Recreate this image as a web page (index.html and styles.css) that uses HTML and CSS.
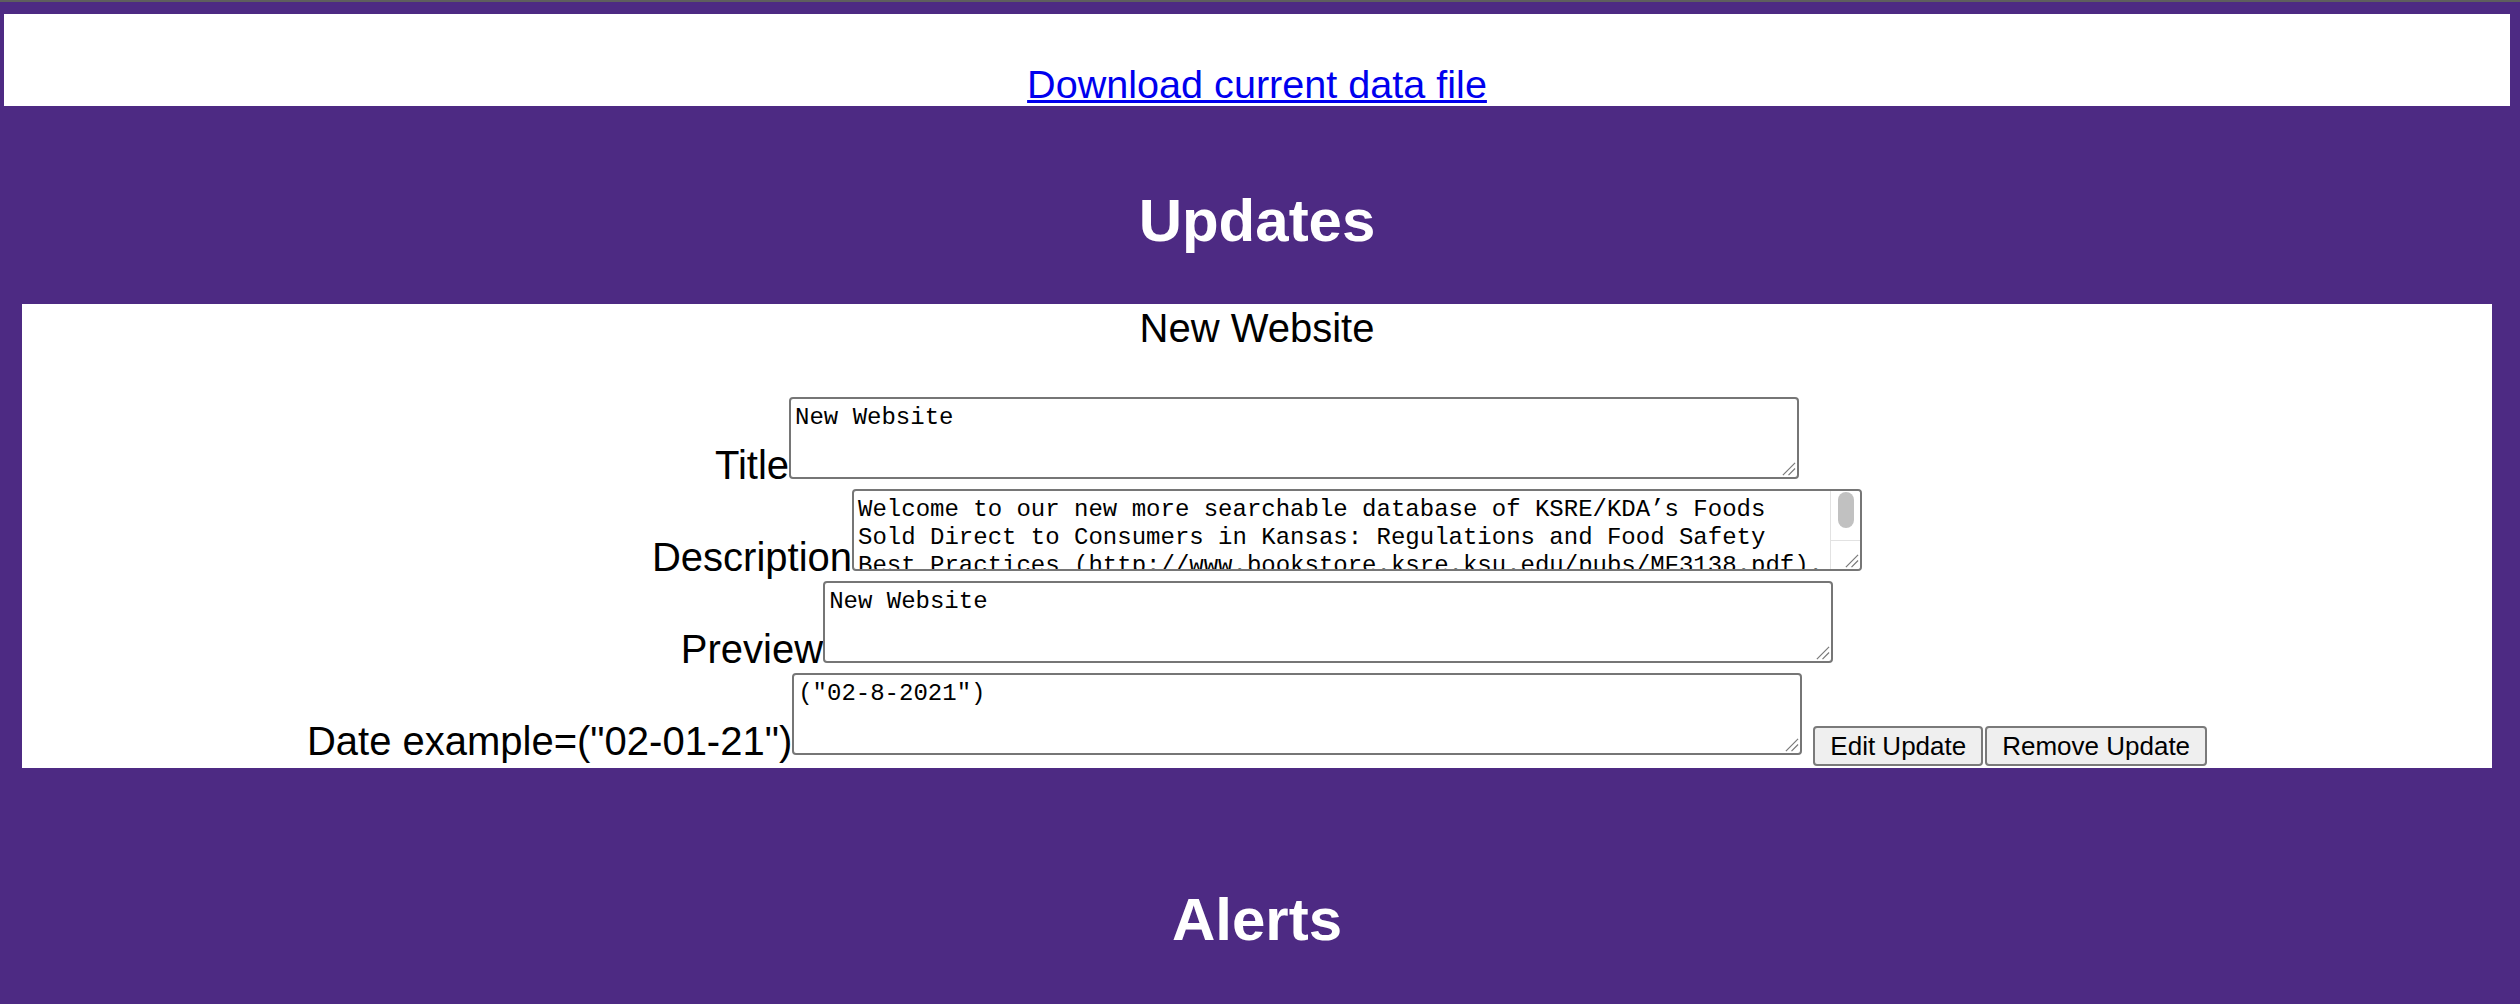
FILE: index.html
```html
<!DOCTYPE html>
<html lang="en">
<head>
<meta charset="utf-8">
<title>Updates</title>
<link rel="stylesheet" href="styles.css">
</head>
<body>
<div class="topline"></div>
<div class="page">
  <div class="download-bar">
    <a href="#" class="download-link">Download current data file</a>
  </div>
  <h2 class="section-title">Updates</h2>
  <div class="card">
    <div class="card-title">New Website</div>
    <div class="field-row"><span class="field-label">Title</span><span class="field-box"><textarea class="field-input">New Website</textarea><svg class="grip" viewBox="0 0 16 16" aria-hidden="true"><path d="M2 15 L15 2 M8 15 L15 8" /></svg></span></div>
    <div class="field-row"><span class="field-label">Description</span><span class="field-box"><textarea class="field-input field-scroll">Welcome to our new more searchable database of KSRE/KDA’s Foods Sold Direct to Consumers in Kansas: Regulations and Food Safety Best Practices (http://www.bookstore.ksre.ksu.edu/pubs/MF3138.pdf). Search by product to find the rules that apply.</textarea><span class="scrollbar" aria-hidden="true"><span class="scroll-track"><span class="scroll-thumb"></span></span><span class="scroll-corner"><svg class="grip grip-corner" viewBox="0 0 16 16"><path d="M2 15 L15 2 M8 15 L15 8" /></svg></span></span></span></div>
    <div class="field-row"><span class="field-label">Preview</span><span class="field-box"><textarea class="field-input">New Website</textarea><svg class="grip" viewBox="0 0 16 16" aria-hidden="true"><path d="M2 15 L15 2 M8 15 L15 8" /></svg></span></div>
    <div class="field-row"><span class="field-label">Date example=("02-01-21")</span><span class="field-box"><textarea class="field-input">("02-8-2021")</textarea><svg class="grip" viewBox="0 0 16 16" aria-hidden="true"><path d="M2 15 L15 2 M8 15 L15 8" /></svg></span> <button class="action-btn">Edit Update</button><button class="action-btn action-btn-next">Remove Update</button></div>
  </div>
  <h2 class="section-title section-title-alerts">Alerts</h2>
</div>
</body>
</html>
```
FILE: styles.css
```css
html, body {
  margin: 0;
  padding: 0;
}

body {
  background: #4d2a83;
  font-family: "Liberation Sans", Arial, sans-serif;
  font-size: 40px;
  line-height: 48px;
  color: #000;
  min-height: 1004px;
}

.topline {
  height: 2px;
  background: #5e5e5e;
}

.page {
  padding: 12px 10px 0 4px;
}

.download-bar {
  background: #fff;
  height: 92px;
  box-sizing: border-box;
  padding-top: 47px;
  line-height: 46px;
  text-align: center;
}

.download-link {
  color: #0000ee;
  font-size: 39.6px;
  text-decoration: underline;
}

.section-title {
  margin: 80px 0 49px;
  font-size: 60px;
  line-height: 69px;
  font-weight: bold;
  color: #fff;
  text-align: center;
}

.section-title-alerts {
  margin-top: 117px;
  margin-bottom: 0;
}

.card {
  margin: 0 18px;
  background: #fff;
  text-align: center;
  padding-bottom: 2px;
}

.card-title {
  margin-bottom: 45px;
}

.field-box {
  position: relative;
  display: inline-block;
  vertical-align: baseline;
}

.field-input {
  display: block;
  width: 1010px;
  height: 82px;
  box-sizing: border-box;
  margin: 0;
  padding: 5px 4px 4px;
  border: 2px solid #767676;
  border-radius: 4px;
  font-family: "Liberation Mono", "Courier New", monospace;
  font-size: 24px;
  line-height: 28px;
  color: #000;
  background: #fff;
  text-align: left;
  resize: none;
  overflow: hidden;
}

.field-scroll {
  padding-right: 33px;
}

.grip {
  position: absolute;
  right: 3px;
  bottom: 3px;
  width: 15px;
  height: 15px;
  fill: none;
  stroke: #7a7a7a;
  stroke-width: 1.3;
}

.scrollbar {
  position: absolute;
  top: 2px;
  right: 2px;
  bottom: 2px;
  width: 30px;
  box-sizing: border-box;
  display: flex;
  flex-direction: column;
  background: #fff;
  border-left: 1px solid #e2e2e2;
  border-radius: 0 3px 3px 0;
}

.scroll-track {
  flex: 1;
  padding: 1px 0 0 7px;
}

.scroll-thumb {
  display: block;
  width: 16px;
  height: 36px;
  border-radius: 8px;
  background: #c1c1c1;
}

.scroll-corner {
  position: relative;
  height: 28px;
  border-top: 1px solid #e2e2e2;
}

.grip-corner {
  right: 1px;
  bottom: 1px;
}

.action-btn {
  height: 40px;
  box-sizing: border-box;
  margin: 0;
  padding: 3px 15px;
  border: 2px solid #7a7a7a;
  border-radius: 4px;
  background: #efefef;
  color: #000;
  font-family: "Liberation Sans", Arial, sans-serif;
  font-size: 26px;
  line-height: normal;
}

.action-btn-next {
  margin-left: 2px;
}
```
